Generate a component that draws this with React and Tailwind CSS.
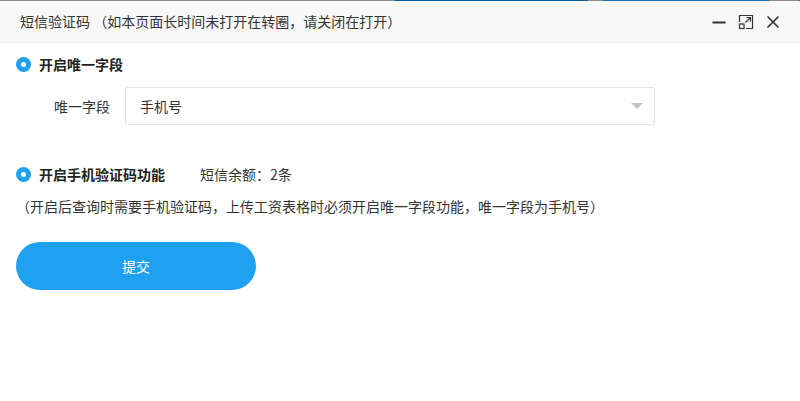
import React, { useState } from "react";

const font = { fontFamily: '"Noto Sans CJK SC", "Noto Sans", sans-serif' };

const Radio = ({ checked = true }) => (
  <span className="flex h-[15px] w-[15px] items-center justify-center rounded-full bg-[#1ea1f1]">
    {checked && <span className="h-[5px] w-[5px] rounded-full bg-white" />}
  </span>
);

const SmsVerify = () => {
  const [uniqueOn] = useState(true);
  const [smsOn] = useState(true);
  const [field] = useState("手机号");

  return (
    <div className="flex h-[401px] w-[800px] flex-col bg-white text-[14px] text-[#333]" style={font}>
      {/* top strip */}
      <div className="flex h-px w-full bg-[#8a8a8a]">
        <div className="w-[395px]" />
        <div className="w-[193px] bg-[#0b5a9c]" />
        <div className="w-[15px]" />
        <div className="w-[166px] bg-[#1a6ea8]" />
        <div className="flex-1" />
        <div className="w-px bg-[#c0392b]" />
      </div>

      {/* header */}
      <div className="flex h-[42px] items-center justify-between border-b border-[#ececec] bg-[#f8f8f8] pl-5 pr-[19px]">
        <span className="text-[14px] text-[#333]">短信验证码 （如本页面长时间未打开在转圈，请关闭在打开）</span>
        <div className="flex items-center gap-[11px] text-[#333]">
          <svg width="16" height="16" viewBox="0 0 16 16">
            <path d="M1.5 8.5h13" stroke="#333" strokeWidth="2" />
          </svg>
          <svg width="16" height="16" viewBox="0 0 16 16" fill="none" stroke="#333" strokeWidth="1.2">
            <path d="M1.5 8V1.5h13v13H8" />
            <rect x="1.5" y="10" width="4.5" height="4.5" />
            <path d="M7.5 8.5l5-5M8.5 3.5h4v4" />
          </svg>
          <svg width="16" height="16" viewBox="0 0 16 16" fill="none" stroke="#333" strokeWidth="1.6">
            <path d="M2.5 2.5l11 11M13.5 2.5l-11 11" />
          </svg>
        </div>
      </div>

      {/* body */}
      <div className="flex flex-col px-4">
        <div className="mt-[11px] flex items-center gap-2">
          <Radio checked={uniqueOn} />
          <span className="font-bold text-[#222]">开启唯一字段</span>
        </div>

        <div className="mt-[12px] flex items-center">
          <span className="w-[109px] pr-[15px] text-right text-[#333]">唯一字段</span>
          <div className="flex h-[38px] w-[530px] items-center justify-between rounded-[2px] border border-[#e6e6e6] bg-white pl-[14px] pr-[11px]">
            <span className="text-[#333]">{field}</span>
            <span className="h-0 w-0 border-x-[6px] border-t-[6px] border-x-transparent border-t-[#c2c2c2]" />
          </div>
        </div>

        <div className="mt-[39px] flex items-center">
          <Radio checked={smsOn} />
          <span className="ml-2 w-[161px] font-bold text-[#222]">开启手机验证码功能</span>
          <span className="text-[#333]">短信余额：2条</span>
        </div>

        <p className="mt-[11px] text-[#333]">（开启后查询时需要手机验证码，上传工资表格时必须开启唯一字段功能，唯一字段为手机号）</p>

        <button className="mt-[25px] h-[48px] w-[240px] rounded-full bg-[#1ea1f1] text-[14px] text-white">
          提交
        </button>
      </div>
    </div>
  );
};

export default function App() {
  return <SmsVerify />;
}
